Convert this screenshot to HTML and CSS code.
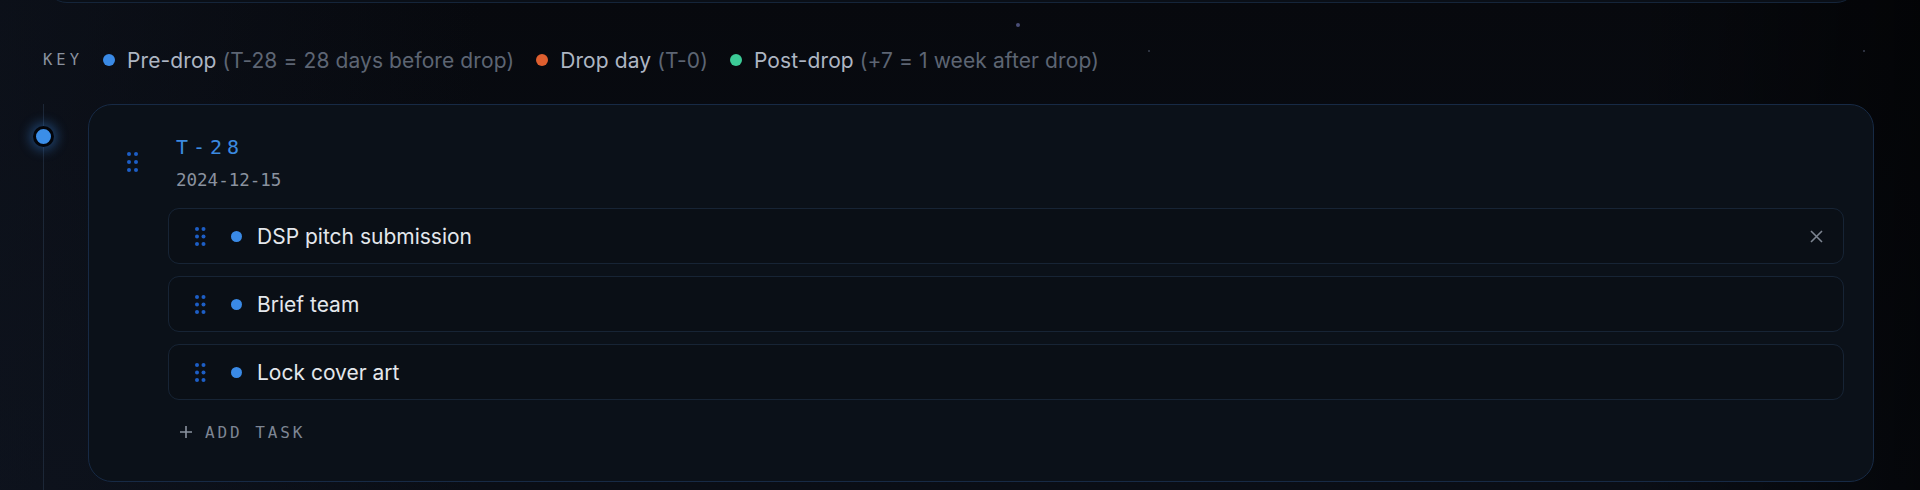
FILE: index.html
```html
<!DOCTYPE html>
<html lang="en">
<head>
<meta charset="utf-8">
<title>Release timeline</title>
<link rel="stylesheet" href="styles.css">
</head>
<body>
<div class="page">
  <div class="panel-foot"></div>

  <div class="legend">
    <span class="legend-key">KEY</span>
    <span class="legend-item"><i class="dot dot-pre"></i><span class="legend-label">Pre-drop</span><span class="legend-note">(T-28 = 28 days before drop)</span></span>
    <span class="legend-item"><i class="dot dot-drop"></i><span class="legend-label">Drop day</span><span class="legend-note">(T-0)</span></span>
    <span class="legend-item"><i class="dot dot-post"></i><span class="legend-label">Post-drop</span><span class="legend-note">(+7 = 1 week after drop)</span></span>
  </div>

  <div class="milestone">
    <div class="rail"><span class="rail-dot"></span></div>
    <section class="card">
      <header class="card-head">
        <svg class="grip grip-lg" width="12" height="20" viewBox="0 0 12 20" aria-hidden="true">
          <circle cx="2" cy="2" r="2"/><circle cx="9" cy="2" r="2"/>
          <circle cx="2" cy="10" r="2"/><circle cx="9" cy="10" r="2"/>
          <circle cx="2" cy="18" r="2"/><circle cx="9" cy="18" r="2"/>
        </svg>
        <div class="card-titles">
          <h2 class="card-title">T-28</h2>
          <div class="card-date">2024-12-15</div>
        </div>
      </header>

      <ul class="tasks">
        <li class="task">
          <svg class="grip" width="11" height="19" viewBox="0 0 11 19" aria-hidden="true">
            <circle cx="2" cy="2" r="2"/><circle cx="8.5" cy="2" r="2"/>
            <circle cx="2" cy="9.5" r="2"/><circle cx="8.5" cy="9.5" r="2"/>
            <circle cx="2" cy="17" r="2"/><circle cx="8.5" cy="17" r="2"/>
          </svg>
          <i class="dot dot-pre task-dot"></i>
          <span class="task-text">DSP pitch submission</span>
          <button class="task-remove" aria-label="Remove task">
            <svg width="13" height="13" viewBox="0 0 13 13"><path d="M1 1L12 12M12 1L1 12"/></svg>
          </button>
        </li>
        <li class="task">
          <svg class="grip" width="11" height="19" viewBox="0 0 11 19" aria-hidden="true">
            <circle cx="2" cy="2" r="2"/><circle cx="8.5" cy="2" r="2"/>
            <circle cx="2" cy="9.5" r="2"/><circle cx="8.5" cy="9.5" r="2"/>
            <circle cx="2" cy="17" r="2"/><circle cx="8.5" cy="17" r="2"/>
          </svg>
          <i class="dot dot-pre task-dot"></i>
          <span class="task-text">Brief team</span>
        </li>
        <li class="task">
          <svg class="grip" width="11" height="19" viewBox="0 0 11 19" aria-hidden="true">
            <circle cx="2" cy="2" r="2"/><circle cx="8.5" cy="2" r="2"/>
            <circle cx="2" cy="9.5" r="2"/><circle cx="8.5" cy="9.5" r="2"/>
            <circle cx="2" cy="17" r="2"/><circle cx="8.5" cy="17" r="2"/>
          </svg>
          <i class="dot dot-pre task-dot"></i>
          <span class="task-text">Lock cover art</span>
        </li>
      </ul>

      <button class="add-task">
        <svg width="14" height="14" viewBox="0 0 14 14" aria-hidden="true"><path d="M7 1V13M1 7H13"/></svg>
        <span>ADD TASK</span>
      </button>
    </section>
  </div>

  <span class="star star-a"></span>
  <span class="star star-b"></span>
  <span class="star star-c"></span>
</div>
</body>
</html>
```

FILE: styles.css
```css
* { box-sizing: border-box; }

html, body {
  margin: 0;
  height: 100%;
}

body {
  background: #080b11;
  font-family: Inter, "Noto Sans", sans-serif;
  color: #e4e7ec;
  overflow: hidden;
}

.page {
  position: relative;
  display: flex;
  flex-direction: column;
  height: 490px;
  overflow: hidden;
  padding: 0 46px 0 33px;
  background:
    linear-gradient(90deg, rgba(16, 22, 34, 0.55) 0%, rgba(8, 11, 17, 0) 25%, rgba(0, 0, 0, 0) 85%, rgba(0, 0, 0, 0.55) 100%),
    linear-gradient(180deg, #07090e 0%, #0a0e16 100%);
}

/* bottom edge of the panel above */
.panel-foot {
  flex: none;
  height: 44px;
  margin: -41px 16px 0 12px;
  border: 1px solid #15253a;
  border-radius: 24px;
  background: #0a0f17;
}

/* legend */
.legend {
  flex: none;
  display: flex;
  align-items: center;
  height: 28px;
  margin: 43px 0 30px 10px;
  font-size: 21px;
  letter-spacing: 0.1px;
  white-space: nowrap;
}

.legend-key {
  font-family: "DejaVu Sans Mono", monospace;
  font-size: 15.5px;
  letter-spacing: 4px;
  color: #8a929f;
  margin-right: 20px;
}

.legend-item {
  display: inline-flex;
  align-items: center;
  margin-right: 22px;
}

.legend-label {
  color: #aeb6c3;
  margin: 0 6px 0 12px;
}

.legend-note {
  color: #5d6573;
}

.dot {
  display: inline-block;
  width: 12px;
  height: 12px;
  border-radius: 50%;
  flex: none;
}
.dot-pre { background: #3a8ae6; }
.dot-drop { background: #df5f2f; }
.dot-post { background: #3ccb97; }

/* timeline milestone */
.milestone {
  flex: 1;
  display: flex;
  gap: 34px;
}

.rail {
  position: relative;
  width: 21px;
  flex: none;
  display: flex;
  justify-content: center;
}

.rail::before {
  content: "";
  width: 1px;
  background: #1c2737;
  height: 100%;
}

.rail-dot {
  position: absolute;
  top: 22px;
  left: 0;
  width: 21px;
  height: 21px;
  border-radius: 50%;
  background: #3b8ee8;
  border: 3px solid #03050a;
  box-shadow: 0 0 12px 3px rgba(58, 138, 230, 0.42);
}

.card {
  flex: 1;
  height: 378px;
  border: 1px solid #172a45;
  border-radius: 24px;
  background: #0b1119;
  padding: 29px 29px 0 38px;
}

.card-head {
  display: flex;
  align-items: center;
  gap: 37px;
}

.grip { fill: #1d5ec6; flex: none; }

.card-title {
  margin: 0;
  font-family: "DejaVu Sans Mono", monospace;
  font-weight: 400;
  font-size: 20px;
  line-height: 26px;
  letter-spacing: 5px;
  color: #3b8ae0;
}

.card-date {
  margin-top: 10px;
  font-family: "DejaVu Sans Mono", monospace;
  font-size: 17.5px;
  line-height: 20px;
  color: #8a929f;
}

.tasks {
  list-style: none;
  margin: 18px 0 0 41px;
  padding: 0;
  display: flex;
  flex-direction: column;
  gap: 12px;
}

.task {
  display: flex;
  align-items: center;
  height: 56px;
  padding: 0 20px 0 26px;
  border: 1px solid #172435;
  border-radius: 11px;
  background: #0a0f16;
}

.task .grip { margin-right: 25px; }

.task-dot {
  width: 11px;
  height: 11px;
  margin-right: 15px;
}

.task-text {
  flex: 1;
  font-size: 21px;
  color: #e4e7ec;
}

.task-remove {
  display: flex;
  padding: 0;
  border: 0;
  background: none;
}

.task-remove svg {
  stroke: #7d8591;
  stroke-width: 1.6;
  fill: none;
}

.add-task {
  display: flex;
  align-items: center;
  gap: 12px;
  height: 32px;
  margin: 16px 0 0 52px;
  padding: 0;
  border: 0;
  background: none;
  font-family: "DejaVu Sans Mono", monospace;
  font-size: 16px;
  letter-spacing: 2.9px;
  color: #7e8694;
}

.add-task svg {
  stroke: #8a929f;
  stroke-width: 1.6;
  fill: none;
}

/* tiny background stars */
.star {
  position: absolute;
  width: 3px;
  height: 3px;
  border-radius: 50%;
  background: #4a4f78;
}
.star-a { left: 1016px; top: 23px; width: 4px; height: 4px; }
.star-b { left: 1148px; top: 50px; width: 2px; height: 2px; background: #3a4050; }
.star-c { left: 1863px; top: 50px; width: 2px; height: 2px; background: #3a4050; }
```
